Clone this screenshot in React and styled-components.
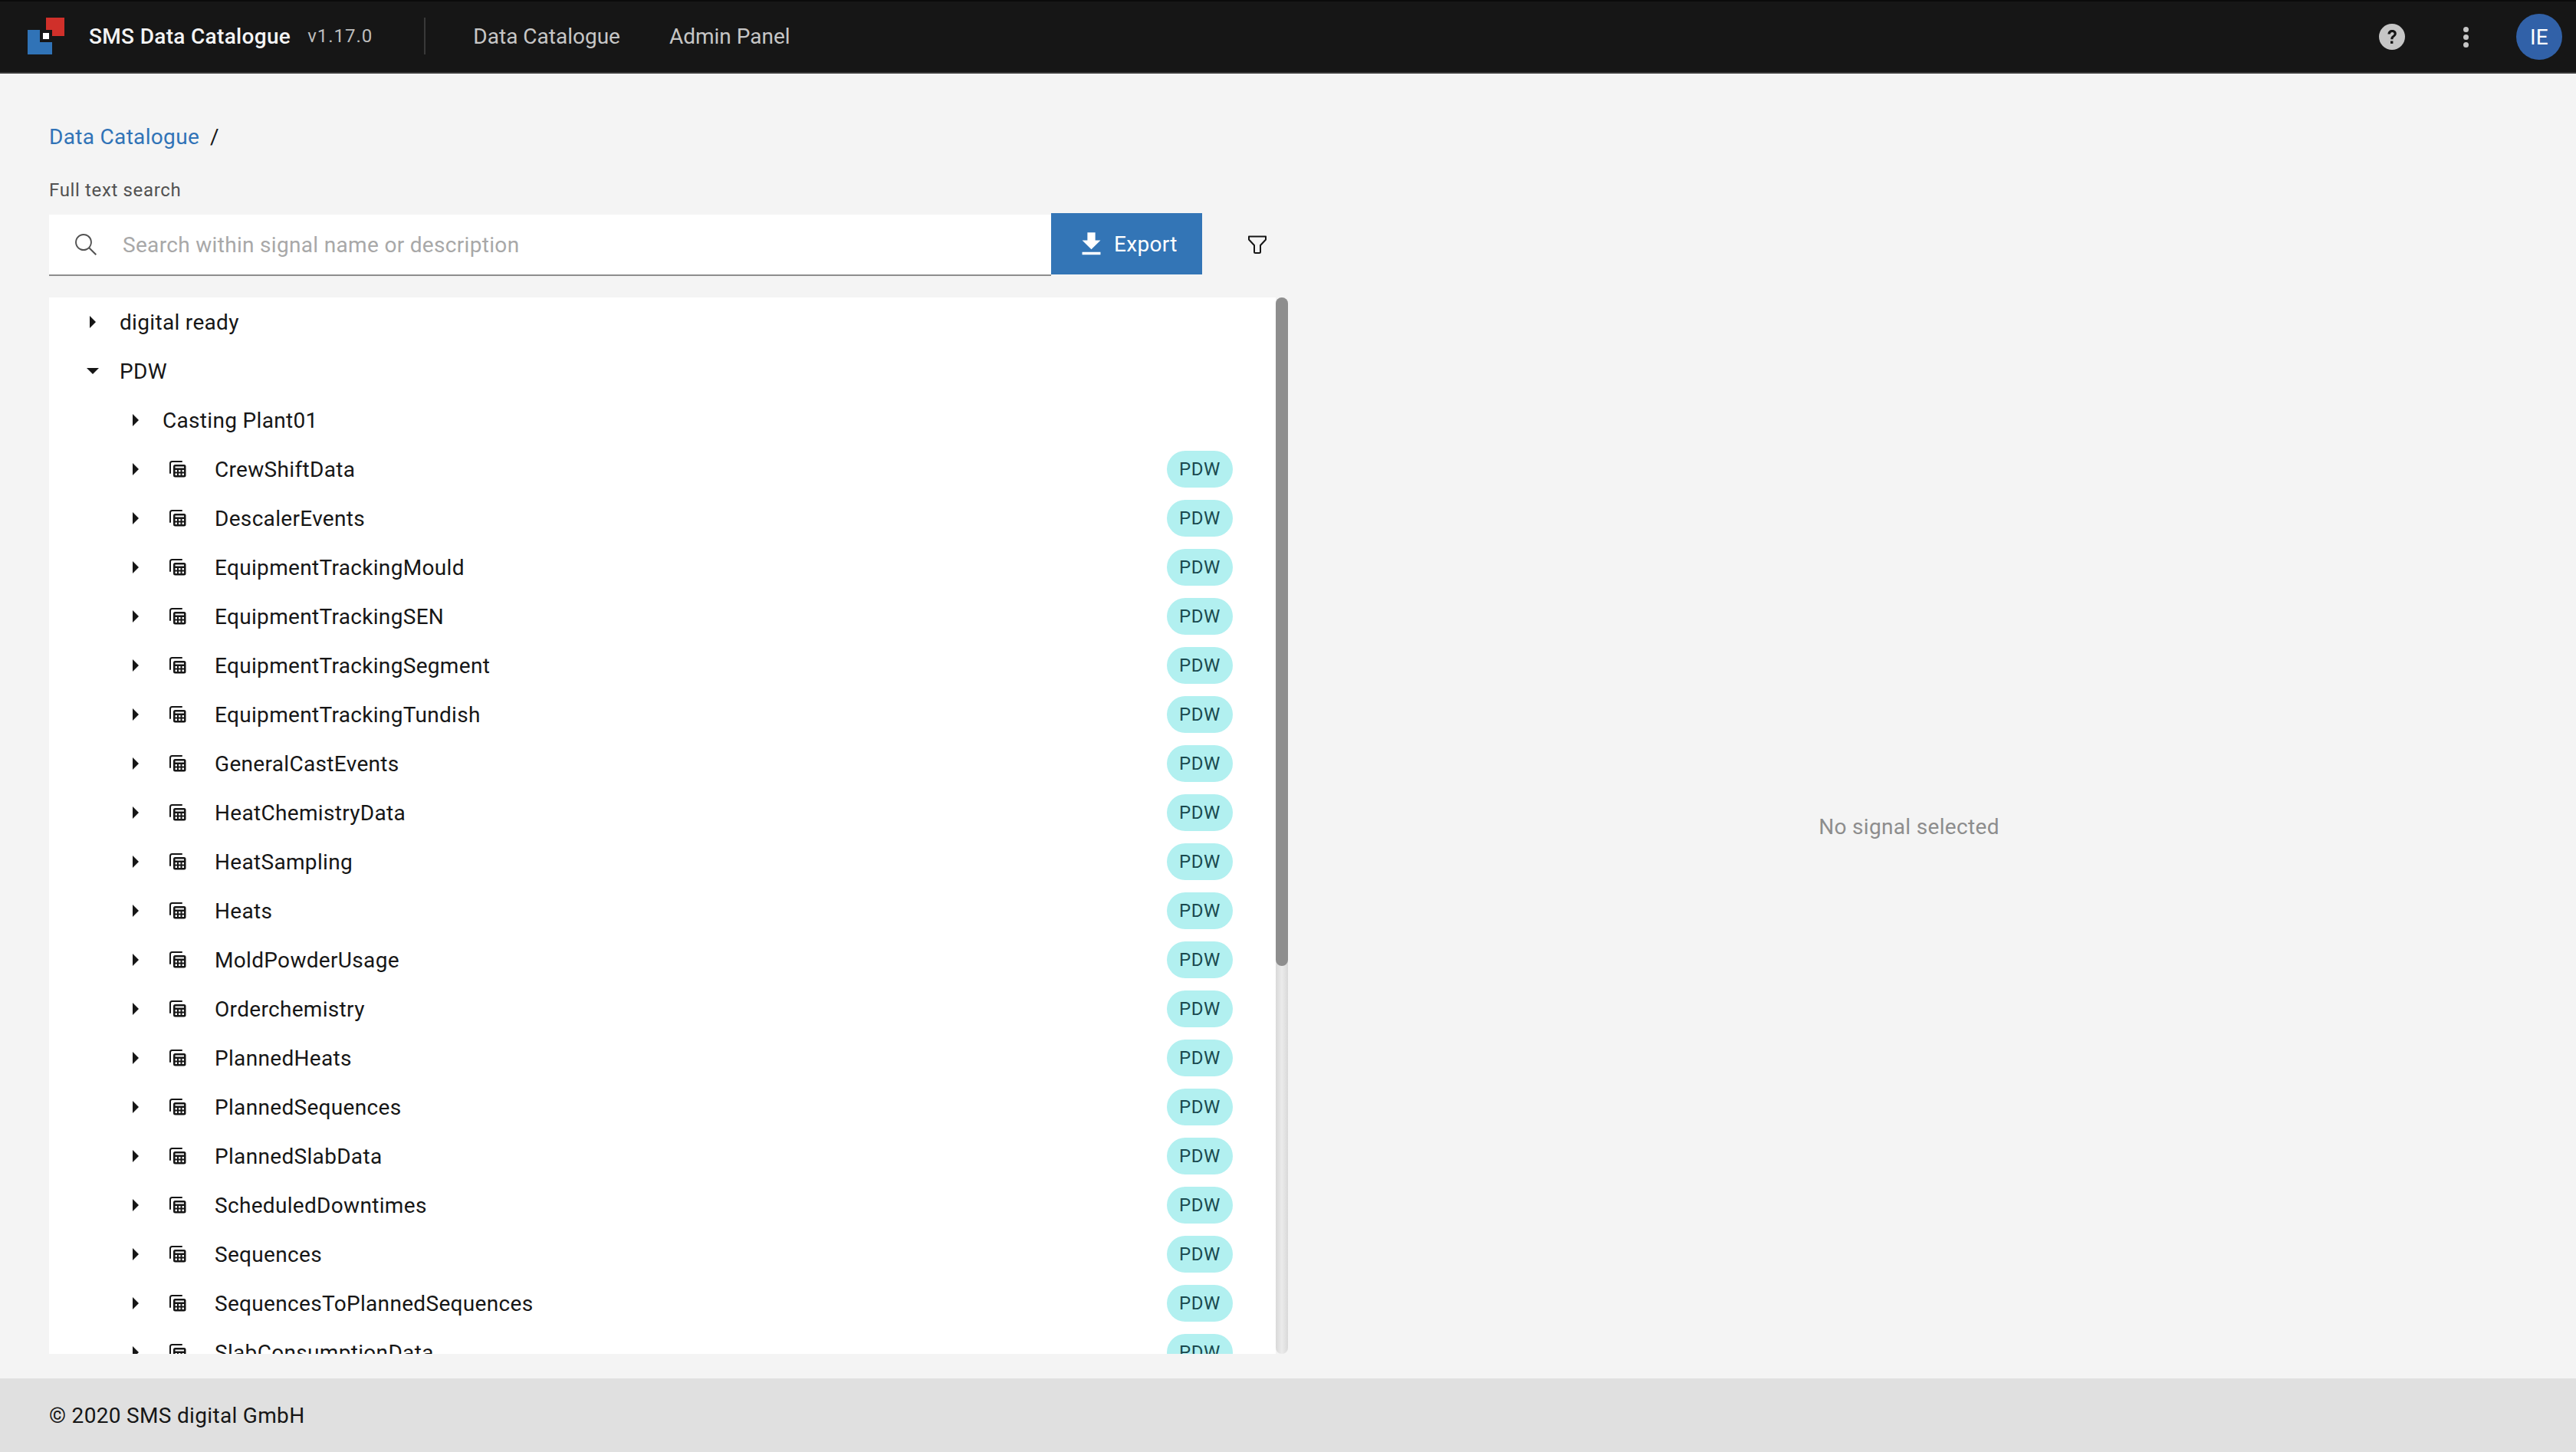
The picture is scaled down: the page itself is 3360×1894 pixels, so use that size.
import React from 'react';
import styled, { createGlobalStyle } from 'styled-components';

const TABLES = [
    'CrewShiftData',
    'DescalerEvents',
    'EquipmentTrackingMould',
    'EquipmentTrackingSEN',
    'EquipmentTrackingSegment',
    'EquipmentTrackingTundish',
    'GeneralCastEvents',
    'HeatChemistryData',
    'HeatSampling',
    'Heats',
    'MoldPowderUsage',
    'Orderchemistry',
    'PlannedHeats',
    'PlannedSequences',
    'PlannedSlabData',
    'ScheduledDowntimes',
    'Sequences',
    'SequencesToPlannedSequences',
    'SlabConsumptionData',
];

const GlobalStyle = createGlobalStyle`
    html, body {
        margin: 0;
        padding: 0;
        height: 100%;
    }
    body {
        background: #f4f4f4;
        font-family: Roboto, "Liberation Sans", sans-serif;
        font-size: 28px;
        letter-spacing: 0.32px;
        color: #161616;
    }
    * {
        box-sizing: border-box;
    }
`;

const Caret = ({ open }) => (
    <CaretBox>
        <svg width="32" height="32" viewBox="0 0 32 32" fill="#161616">
            {open ? <path d="M8 12L24 12 16 20z" /> : <path d="M12 8L20 16 12 24z" />}
        </svg>
    </CaretBox>
);

const TableIcon = () => (
    <TableIconBox>
        <svg width="22" height="22" viewBox="0 0 22 22">
            <path d="M1 16V3.500C1 2 2 1 3.500 1H16" fill="none" stroke="#161616" strokeWidth="2" strokeLinecap="round" />
            <rect x="5" y="5" width="16.500" height="16.500" rx="2.500" fill="#161616" />
            <rect x="7.500" y="7.500" width="11.500" height="2" fill="#fff" />
            <path d="M7.500 12h2.500v2.500H7.500zM12 12h2.500v2.500H12zM16.500 12H19v2.500h-2.500zM7.500 16.500h2.500V19H7.500zM12 16.500h2.500V19H12zM16.500 16.500H19V19h-2.500z" fill="#fff" />
        </svg>
    </TableIconBox>
);

const App = () => {
    return (
        <Page>
            <GlobalStyle />
            <Header>
                <Logo width="48" height="48" viewBox="0 0 48 48">
                    <path d="M0 16H16V32H32V48H0z" fill="#3073b7" />
                    <path d="M24 0H48V24H32V16H24z" fill="#d0302a" />
                    <rect x="20" y="20" width="8" height="8" fill="#fff" />
                </Logo>
                <AppName>SMS Data Catalogue</AppName>
                <Version>v1.17.0</Version>
                <HeaderDivider />
                <NavItem>Data Catalogue</NavItem>
                <NavItem>Admin Panel</NavItem>
                <HeaderRight>
                    <svg width="34" height="34" viewBox="0 0 34 34">
                        <circle cx="17" cy="17" r="17" fill="#c6c6c6" />
                        <path d="M11.500 13.500C11.500 10 14 8 17.200 8c3.300 0 5.600 2 5.600 4.800 0 2.200-1.200 3.300-2.700 4.400-1.300 1-1.600 1.500-1.600 3.100h-3.200c0-2.500.6-3.500 2.300-4.800 1.300-1 2-1.600 2-2.600 0-1.100-.9-1.900-2.300-1.900-1.500 0-2.400 1-2.500 2.500z" fill="#161616" />
                        <rect x="15" y="22.500" width="3.400" height="3.400" fill="#161616" />
                    </svg>
                    <MenuDots>
                        <span />
                        <span />
                        <span />
                    </MenuDots>
                    <Avatar>IE</Avatar>
                </HeaderRight>
            </Header>

            <Main>
                <LeftColumn>
                    <Breadcrumb>
                        <BreadcrumbLink>Data Catalogue</BreadcrumbLink>
                        <span>/</span>
                    </Breadcrumb>
                    <SearchLabel>Full text search</SearchLabel>
                    <SearchRow>
                        <SearchField>
                            <svg width="32" height="32" viewBox="0 0 16 16" fill="#525252">
                                <path d="M15,14.300L10.700,10c1.900-2.300,1.600-5.800-0.700-7.700S4.200,0.700,2.300,3S0.700,8.800,3,10.700c2,1.700,5,1.700,7,0l4.300,4.300L15,14.300z M2,6.500C2,4,4,2,6.500,2S11,4,11,6.500S9,11,6.500,11S2,9,2,6.500z" />
                            </svg>
                            <SearchInput placeholder="Search within signal name or description" readOnly />
                        </SearchField>
                        <ExportButton>
                            <svg width="41" height="41" viewBox="0 0 24 24" fill="#fff">
                                <path d="M19 9h-4V3H9v6H5l7 7 7-7zM5 18v2h14v-2H5z" />
                            </svg>
                            Export
                        </ExportButton>
                        <FilterButton>
                            <svg width="24" height="24" viewBox="0 0 24 24" fill="none" stroke="#161616" strokeWidth="2" strokeLinejoin="round">
                                <path d="M1 1.500H23V5.500L16 13V21.500A1.500 1.500 0 0 1 14.500 23H9.500A1.500 1.500 0 0 1 8 21.500V13L1 5.500z" />
                            </svg>
                        </FilterButton>
                    </SearchRow>
                    <TreeWrap>
                        <Tree>
                            <Row $level={0}>
                                <Caret />
                                <RowLabel>digital ready</RowLabel>
                            </Row>
                            <Row $level={0}>
                                <Caret open />
                                <RowLabel>PDW</RowLabel>
                            </Row>
                            <Row $level={1}>
                                <Caret />
                                <RowLabel>Casting Plant01</RowLabel>
                            </Row>
                            {TABLES.map((name) => (
                                <Row $level={1} key={name}>
                                    <Caret />
                                    <TableIcon />
                                    <TableName>{name}</TableName>
                                    <Chip>PDW</Chip>
                                </Row>
                            ))}
                        </Tree>
                        <ScrollTrack>
                            <ScrollThumb />
                        </ScrollTrack>
                    </TreeWrap>
                </LeftColumn>
                <DetailPane>No signal selected</DetailPane>
            </Main>

            <Footer>© 2020 SMS digital GmbH</Footer>
        </Page>
    );
};

export default App;

const Page = styled.div`
    height: 1894px;
    display: flex;
    flex-direction: column;
`;

const Header = styled.header`
    height: 96px;
    flex: none;
    display: flex;
    align-items: center;
    background: #161616;
    border-top: 2px solid #0b0b0b;
    border-bottom: 2px solid #393939;
`;

const Logo = styled.svg`
    margin-left: 36px;
    margin-top: -2px;
    flex: none;
`;

const AppName = styled.span`
    margin-left: 32px;
    font-weight: 500;
    color: #f4f4f4;
    margin-top: -2px;
`;

const Version = styled.span`
    margin-left: 22px;
    font-size: 24px;
    letter-spacing: 1px;
    color: #bdbdbd;
    margin-top: -2px;
`;

const HeaderDivider = styled.div`
    width: 2px;
    height: 48px;
    margin: -2px 30px 0 67px;
    background: #393939;
`;

const NavItem = styled.a`
    padding: 0 32px;
    color: #c6c6c6;
    letter-spacing: 0;
    margin-top: -2px;
`;

const HeaderRight = styled.div`
    margin-left: auto;
    margin-right: 18px;
    display: flex;
    align-items: center;
`;

const MenuDots = styled.div`
    margin-left: 76px;
    display: flex;
    flex-direction: column;
    gap: 3px;

    span {
        width: 7px;
        height: 7px;
        border-radius: 50%;
        background: #c6c6c6;
    }
`;

const Avatar = styled.div`
    margin-left: 62px;
    width: 60px;
    height: 60px;
    border-radius: 50%;
    background: #3161a8;
    color: #fff;
    display: flex;
    align-items: center;
    justify-content: center;
`;

const Main = styled.main`
    flex: 1;
    min-height: 0;
    display: flex;
`;

const LeftColumn = styled.div`
    width: 1680px;
    flex: none;
    padding: 0 0 32px 64px;
    display: flex;
    flex-direction: column;
`;

const Breadcrumb = styled.div`
    margin-top: 64px;
    height: 36px;
    display: flex;
    align-items: center;
    gap: 14px;
`;

const BreadcrumbLink = styled.a`
    color: #3073b7;
`;

const SearchLabel = styled.label`
    margin-top: 34px;
    height: 36px;
    display: flex;
    align-items: center;
    font-size: 24px;
    letter-spacing: 0.64px;
    color: #525252;
`;

const SearchRow = styled.div`
    margin-top: 12px;
    height: 82px;
    flex: none;
    display: flex;
    align-items: flex-start;
`;

const SearchField = styled.div`
    width: 1307px;
    height: 80px;
    margin-top: 2px;
    padding-left: 32px;
    background: #fff;
    border-bottom: 2px solid #8d8d8d;
    display: flex;
    align-items: center;
`;

const SearchInput = styled.input`
    flex: 1;
    margin-left: 30px;
    border: none;
    outline: none;
    background: transparent;
    font: inherit;
    letter-spacing: inherit;
    color: #161616;

    &::placeholder {
        color: #a8a8a8;
        opacity: 1;
    }
`;

const ExportButton = styled.button`
    width: 197px;
    height: 80px;
    padding: 0 0 0 32px;
    border: none;
    background: #3375b6;
    color: #fff;
    font: inherit;
    letter-spacing: inherit;
    display: flex;
    align-items: center;
    gap: 10px;

    svg {
        margin-right: -1px;
        flex: none;
    }
`;

const FilterButton = styled.div`
    margin-left: 60px;
    height: 82px;
    display: flex;
    align-items: center;
`;

const TreeWrap = styled.div`
    margin-top: 28px;
    flex: 1;
    min-height: 0;
    display: flex;
`;

const Tree = styled.div`
    flex: 1;
    min-width: 0;
    background: #fff;
    overflow: hidden;
`;

const Row = styled.div`
    height: 64px;
    display: flex;
    align-items: center;
    padding-left: ${(p) => (p.$level === 0 ? 41 : 97)}px;
    padding-right: 56px;
`;

const CaretBox = styled.span`
    width: 32px;
    height: 32px;
    flex: none;
    display: flex;
`;

const RowLabel = styled.span`
    margin-left: 19px;
`;

const TableIconBox = styled.span`
    margin-left: 28px;
    width: 22px;
    height: 22px;
    flex: none;
    display: flex;
`;

const TableName = styled.span`
    margin-left: 37px;
    flex: 1;
`;

const Chip = styled.span`
    width: 86px;
    height: 48px;
    flex: none;
    border-radius: 24px;
    background: #b2f0f0;
    color: #1a4a4f;
    font-size: 24px;
    letter-spacing: 0.64px;
    display: flex;
    align-items: center;
    justify-content: center;
`;

const ScrollTrack = styled.div`
    width: 16px;
    flex: none;
    border-radius: 8px;
    background: linear-gradient(to right, #d9d9d9, #ebebeb 50%, #d9d9d9);
`;

const ScrollThumb = styled.div`
    height: 872px;
    border-radius: 8px;
    background: #8e8e8e;
`;

const DetailPane = styled.div`
    flex: 1;
    padding: 262px 60px 0 0;
    display: flex;
    align-items: center;
    justify-content: center;
    color: #8d8d8d;
`;

const Footer = styled.footer`
    height: 96px;
    flex: none;
    padding-left: 64px;
    background: #e0e0e0;
    display: flex;
    align-items: center;
`;
